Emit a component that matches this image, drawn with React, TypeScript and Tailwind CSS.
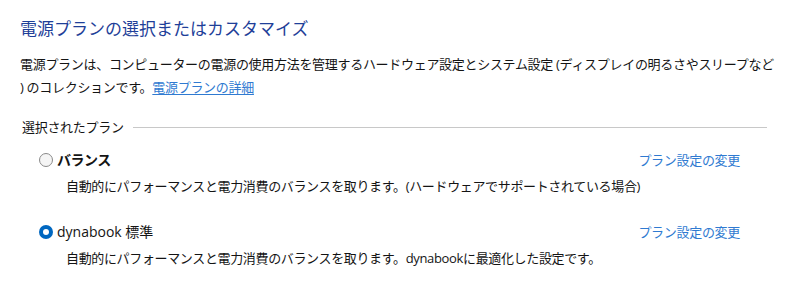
import React from 'react';

const FONT = "font-['Segoe_UI','Open_Sans','Noto_Sans_CJK_JP',sans-serif]";

interface Plan {
  name: string;
  description: string;
  selected: boolean;
  bold?: boolean;
}

const plans: Plan[] = [
  {
    name: 'バランス',
    description:
      '自動的にパフォーマンスと電力消費のバランスを取ります。(ハードウェアでサポートされている場合)',
    selected: false,
    bold: true,
  },
  {
    name: 'dynabook 標準',
    description: '自動的にパフォーマンスと電力消費のバランスを取ります。dynabookに最適化した設定です。',
    selected: true,
  },
];

function Radio({ checked }: { checked: boolean }) {
  if (checked) {
    return (
      <span className="flex h-[14px] w-[14px] items-center justify-center rounded-full bg-[#0067c0]">
        <span className="h-[6px] w-[6px] rounded-full bg-white" />
      </span>
    );
  }
  return <span className="h-[14px] w-[14px] rounded-full border border-[#8a8a8a] bg-[#f5f5f5]" />;
}

export default function App() {
  return (
    <div className={`h-[294px] w-[800px] overflow-hidden bg-white pl-[20px] text-[#141414] ${FONT}`}>
      {/* Title */}
      <h1 className="mt-[17px] text-[17px] leading-[24px] text-[#1f3f99]">
        電源プランの選択またはカスタマイズ
      </h1>

      {/* Intro */}
      <p className="mt-[12px] text-[13px] leading-[23px] tracking-[-0.3px]">
        電源プランは、コンピューターの電源の使用方法を管理するハードウェア設定とシステム設定 (ディスプレイの明るさやスリープなど
        <br />) のコレクションです。
        <a href="#" className="text-[#2f7ad1] underline underline-offset-2">
          電源プランの詳細
        </a>
      </p>

      {/* Group header */}
      <div className="mt-[18px] flex items-center pl-[2px] pr-[33px]">
        <span className="text-[13px] leading-[20px] tracking-[-0.3px]">選択されたプラン</span>
        <span className="ml-[9px] h-px flex-1 bg-[#c8c8c8]" />
      </div>

      {/* Plans */}
      <div className="mt-[12px] flex flex-col gap-[24px] pr-[60px]">
        {plans.map((plan) => (
          <div key={plan.name}>
            <div className="flex items-center pl-[19px]">
              <Radio checked={plan.selected} />
              <span
                className={`ml-[4px] flex-1 text-[14px] leading-[22px] ${plan.bold ? 'font-bold tracking-[-0.5px]' : ''}`}
              >
                {plan.name}
              </span>
              <a href="#" className="text-[13px] leading-[22px] tracking-[-0.3px] text-[#2f7ad1]">
                プラン設定の変更
              </a>
            </div>
            <p className="mt-[4px] pl-[46px] text-[13px] leading-[22px] tracking-[-0.35px]">
              {plan.description}
            </p>
          </div>
        ))}
      </div>
    </div>
  );
}
